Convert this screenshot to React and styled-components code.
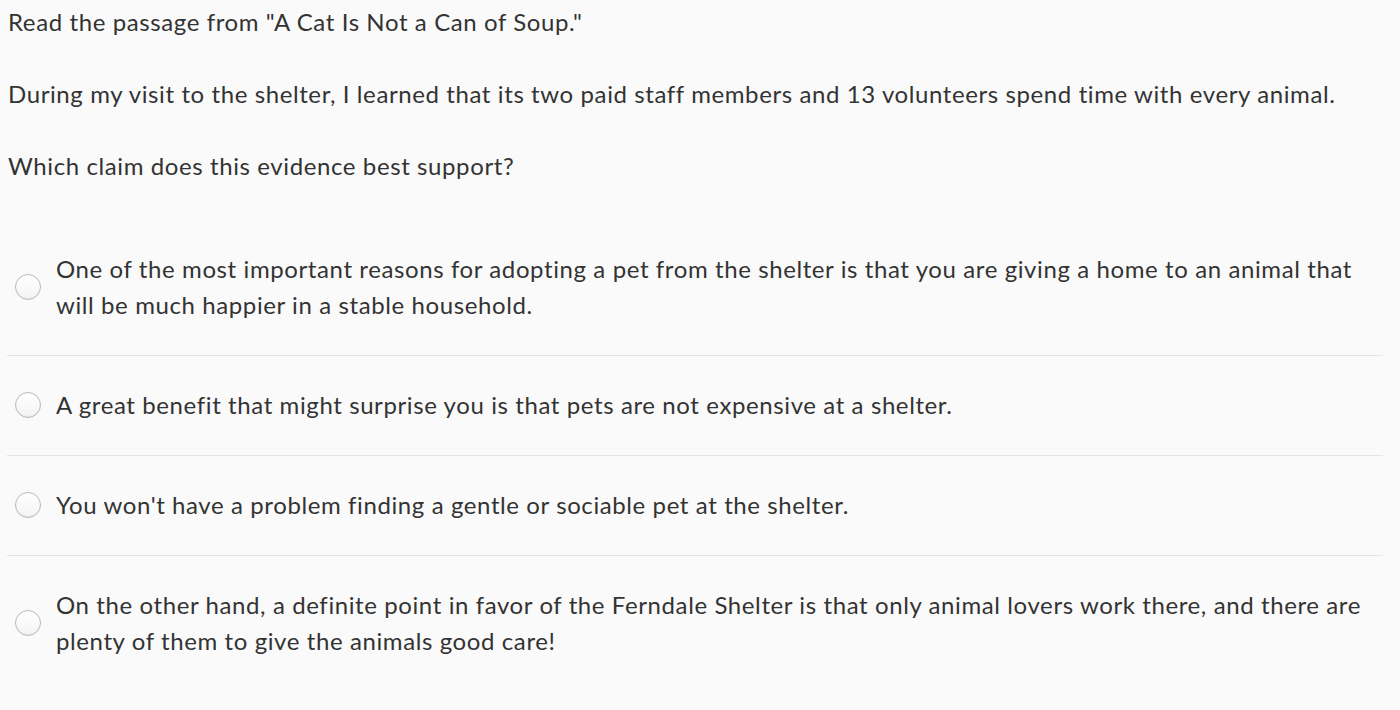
import React from 'react'
import styled, { createGlobalStyle } from 'styled-components'

const GlobalStyle = createGlobalStyle`
  html, body {
    margin: 0;
    padding: 0;
    background: #fafafa;
  }
  body {
    font-family: Lato, "Open Sans", sans-serif;
    color: #333;
  }
`

const Page = styled.div`
  padding: 4px 7px 0 8px;
  width: 1385px;
  box-sizing: border-box;
`

const Para = styled.p`
  margin: 0 0 36px;
  font-size: 24px;
  line-height: 36px;
  letter-spacing: 0.6px;
`

const Options = styled.div`
  width: 1376px;
  margin-left: -1px;
`

const Option = styled.label`
  display: flex;
  align-items: center;
  padding: 31px 0 32px;
  border-bottom: ${({ $last }) => ($last ? 'none' : '1px solid #e4e4e4')};
  cursor: pointer;
`

const Radio = styled.span`
  flex: none;
  width: 26px;
  height: 26px;
  margin: 0 15px 0 8px;
  border-radius: 50%;
  box-sizing: border-box;
  border: 1px solid #b9b9b9;
  background: linear-gradient(#ffffff, #f3f3f3);
  box-shadow: inset 0 -1px 1px rgba(0, 0, 0, 0.06);
`

const OptionText = styled.span`
  font-size: 24px;
  line-height: 36px;
  letter-spacing: 0.6px;
`

const choices = [
  'One of the most important reasons for adopting a pet from the shelter is that you are giving a home to an animal that will be much happier in a stable household.',
  'A great benefit that might surprise you is that pets are not expensive at a shelter.',
  "You won't have a problem finding a gentle or sociable pet at the shelter.",
  'On the other hand, a definite point in favor of the Ferndale Shelter is that only animal lovers work there, and there are plenty of them to give the animals good care!',
]

export default function App() {
  return (
    <>
      <GlobalStyle />
      <Page>
        <Para>Read the passage from "A Cat Is Not a Can of Soup."</Para>
        <Para>
          During my visit to the shelter, I learned that its two paid staff members and 13 volunteers spend time with every animal.
        </Para>
        <Para>Which claim does this evidence best support?</Para>
        <Options>
          {choices.map((c, i) => (
            <Option key={i} $last={i === choices.length - 1}>
              <Radio />
              <OptionText>{c}</OptionText>
            </Option>
          ))}
        </Options>
      </Page>
    </>
  )
}
